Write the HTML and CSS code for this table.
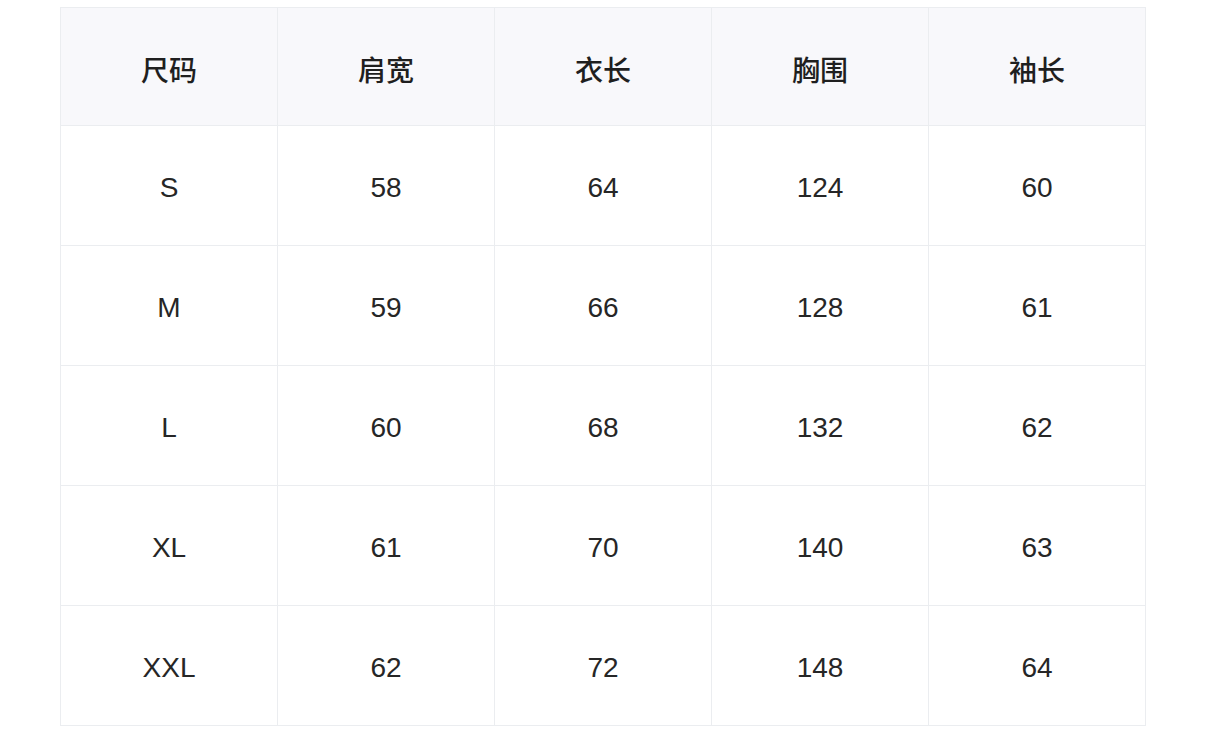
FILE: index.html
```html
<!DOCTYPE html>
<html lang="zh-CN">
<head>
<meta charset="utf-8">
<link rel="stylesheet" href="styles.css">
</head>
<body>
<div class="wrap">
<table class="size-table">
<thead>
<tr><th>尺码</th><th>肩宽</th><th>衣长</th><th>胸围</th><th>袖长</th></tr>
</thead>
<tbody>
<tr><td>S</td><td>58</td><td>64</td><td>124</td><td>60</td></tr>
<tr><td>M</td><td>59</td><td>66</td><td>128</td><td>61</td></tr>
<tr><td>L</td><td>60</td><td>68</td><td>132</td><td>62</td></tr>
<tr><td>XL</td><td>61</td><td>70</td><td>140</td><td>63</td></tr>
<tr><td>XXL</td><td>62</td><td>72</td><td>148</td><td>64</td></tr>
</tbody>
</table>
</div>
</body>
</html>
```
FILE: styles.css
```css
html, body {
  margin: 0;
  padding: 0;
  background: #fff;
}
.wrap {
  padding: 7px 60px 0 60px;
}
.size-table {
  width: 1086px;
  border-collapse: collapse;
  table-layout: fixed;
  font-family: "Liberation Sans", "Noto Sans CJK SC", sans-serif;
  color: #262626;
}
.size-table th,
.size-table td {
  border: 1px solid #ebedf0;
  text-align: center;
  vertical-align: middle;
  padding: 4px 0 0 0;
  font-size: 28px;
}
.size-table th {
  height: 113px;
  background: #f8f8fb;
  font-family: "Noto Sans CJK SC", sans-serif;
  font-weight: 500;
  color: #1f1f1f;
}
.size-table td {
  height: 115px;
  font-weight: 400;
}
```
